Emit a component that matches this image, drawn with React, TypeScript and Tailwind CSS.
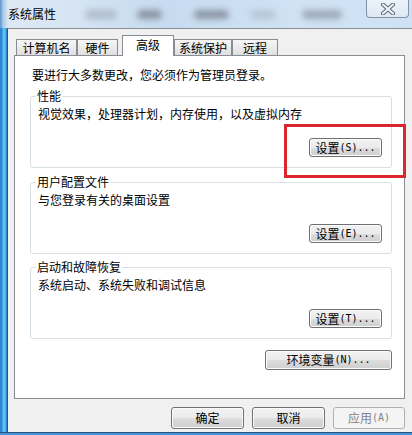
import React from 'react';

const cjk = "font-['Noto_Sans_CJK_SC','Liberation_Sans',sans-serif]";

function Btn({ label, hot, w, h, disabled }: { label: string; hot?: string; w: string; h: string; disabled?: boolean }) {
  return (
    <div
      className={`${w} ${h} flex items-center justify-center rounded-[3px] border text-[12px] leading-none ${
        disabled
          ? 'border-[#adb2b5] bg-[#f4f4f4] text-[#838383]'
          : 'border-[#707070] bg-[linear-gradient(#f2f2f2_0%,#ebebeb_50%,#dddddd_50%,#cfcfcf_100%)] text-black shadow-[inset_0_0_0_1px_#fcfcfc]'
      }`}
    >
      <span>{label}</span>
      {hot && <span className="font-['DejaVu_Sans_Mono',monospace] text-[10px]">{hot}</span>}
    </div>
  );
}

function Group({ title, desc, hot }: { title: string; desc: string; hot: string }) {
  return (
    <fieldset className="ml-[15px] w-[362px] rounded-[3px] border border-[#d5dfe5] px-[7px] pb-[10px]">
      <legend className="-ml-[2px] px-[1px] text-[12px] leading-[16px]">{title}</legend>
      <p className="pt-[2px] text-[12px] leading-[16px]">{desc}</p>
      <div className="mt-[16px] flex justify-end pr-[2px]">
        <Btn label="设置" hot={hot} w="w-[73px]" h="h-[19px]" />
      </div>
    </fieldset>
  );
}

const tabs = [
  { label: '计算机名', w: 'w-[61px]' },
  { label: '硬件', w: 'w-[41px] mr-[4px]' },
  { label: '高级', w: 'w-[52px]', active: true },
  { label: '系统保护', w: 'w-[58px]' },
  { label: '远程', w: 'w-[46px]' },
];

// blurred menu text from the window behind
const blobs = [
  'ml-[29px] w-[32px] bg-[#a7b3c2]',
  'ml-[20px] w-[25px] bg-[#7a828e]',
  'ml-[32px] w-[35px] bg-[#7c8491]',
  'ml-[21px] w-[26px] bg-[#b3c0cf]',
  'ml-[26px] w-[40px] bg-[#8f9bab]',
];

export default function App() {
  return (
    <div className={`relative flex h-[435px] w-[412px] flex-col overflow-hidden bg-[#3f96dc] ${cjk} text-black`}>
      {/* title bar */}
      <div className="flex h-[28px] items-start bg-[linear-gradient(90deg,#5d93cf_0px,#a9c8e8_3px,#dce8f4_8px,#d6e5f3_70px,#c6dbf0_160px,#d0e2f4_300px,#cfe2f5_412px)]">
        <span className="ml-[8px] mt-[6px] text-[12px] leading-[16px] text-black">系统属性</span>
        {blobs.map((b, i) => (
          <div key={i} className={`mt-[10px] h-[9px] rounded-full opacity-80 blur-[3px] ${b}`} />
        ))}
        <div className="ml-auto mr-[3px] flex h-[18px] w-[43px] items-center justify-center rounded-b-[4px] border border-t-0 border-[#8592a6] bg-[linear-gradient(#edf3fa,#dde8f4)]">
          <svg width="16" height="12" viewBox="0 0 16 12">
            <path d="M3 1.5 L13 10.5 M13 1.5 L3 10.5" stroke="#5d6878" strokeWidth="4" strokeLinecap="round" />
            <path d="M3 1.5 L13 10.5 M13 1.5 L3 10.5" stroke="#f4f6f9" strokeWidth="2" strokeLinecap="round" />
          </svg>
        </div>
      </div>

      <div className="flex flex-1">
        {/* left frame */}
        <div className="w-[7px] bg-[linear-gradient(90deg,#2f86d6_0px,#2f86d6_2px,#5ec3f0_3px,#5ec3f0_5px,#3a8fd8_6px)]" />
        {/* client area */}
        <div className="flex flex-1 flex-col border-l border-t border-l-[#2b4f7a] border-t-[#8a8f96] bg-[#f0f0f0]">
          <div className="ml-[8px] mt-[6px] -mb-px flex h-[21px] items-end">
            {tabs.map((t) =>
              t.active ? (
                <div
                  key={t.label}
                  className={`relative z-10 flex h-[21px] items-center justify-center border border-b-0 border-[#898c95] bg-white pb-[2px] text-[12px] ${t.w}`}
                >
                  {t.label}
                </div>
              ) : (
                <div
                  key={t.label}
                  className={`mb-[1px] flex h-[16px] items-center justify-center border border-b-0 border-[#898c95] bg-[linear-gradient(#f6f6f6,#e0e0e0)] text-[12px] ${t.w}`}
                >
                  {t.label}
                </div>
              )
            )}
          </div>

          <div className="ml-[6px] h-[344px] w-[391px] border border-[#898c95] bg-white">
            <p className="pl-[17px] pt-[11px] text-[12px] leading-[16px]">要进行大多数更改，您必须作为管理员登录。</p>
            <div className="mt-[5px]">
              <Group title="性能" desc="视觉效果，处理器计划，内存使用，以及虚拟内存" hot="(S)..." />
            </div>
            <div className="mt-[6px]">
              <Group title="用户配置文件" desc="与您登录有关的桌面设置" hot="(E)..." />
            </div>
            <div className="mt-[5px]">
              <Group title="启动和故障恢复" desc="系统启动、系统失败和调试信息" hot="(T)..." />
            </div>
            <div className="mt-[11px] flex w-[377px] justify-end">
              <Btn label="环境变量" hot="(N)..." w="w-[127px]" h="h-[20px]" />
            </div>
          </div>

          <div className="mt-[8px] flex justify-end gap-[8px] pr-[7px]">
            <Btn label="确定" w="w-[73px]" h="h-[22px]" />
            <Btn label="取消" w="w-[73px]" h="h-[22px]" />
            <Btn label="应用" hot="(A)" w="w-[72px]" h="h-[22px]" disabled />
          </div>
        </div>
      </div>
      {/* bottom frame */}
      <div className="h-[3px] border-t border-[#2b4f7a] bg-[#3f96dc]" />

      {/* red highlight annotation */}
      <div className="absolute left-[284px] top-[124px] h-[54px] w-[122px] border-[3px] border-[#d9262f]" />
    </div>
  );
}
